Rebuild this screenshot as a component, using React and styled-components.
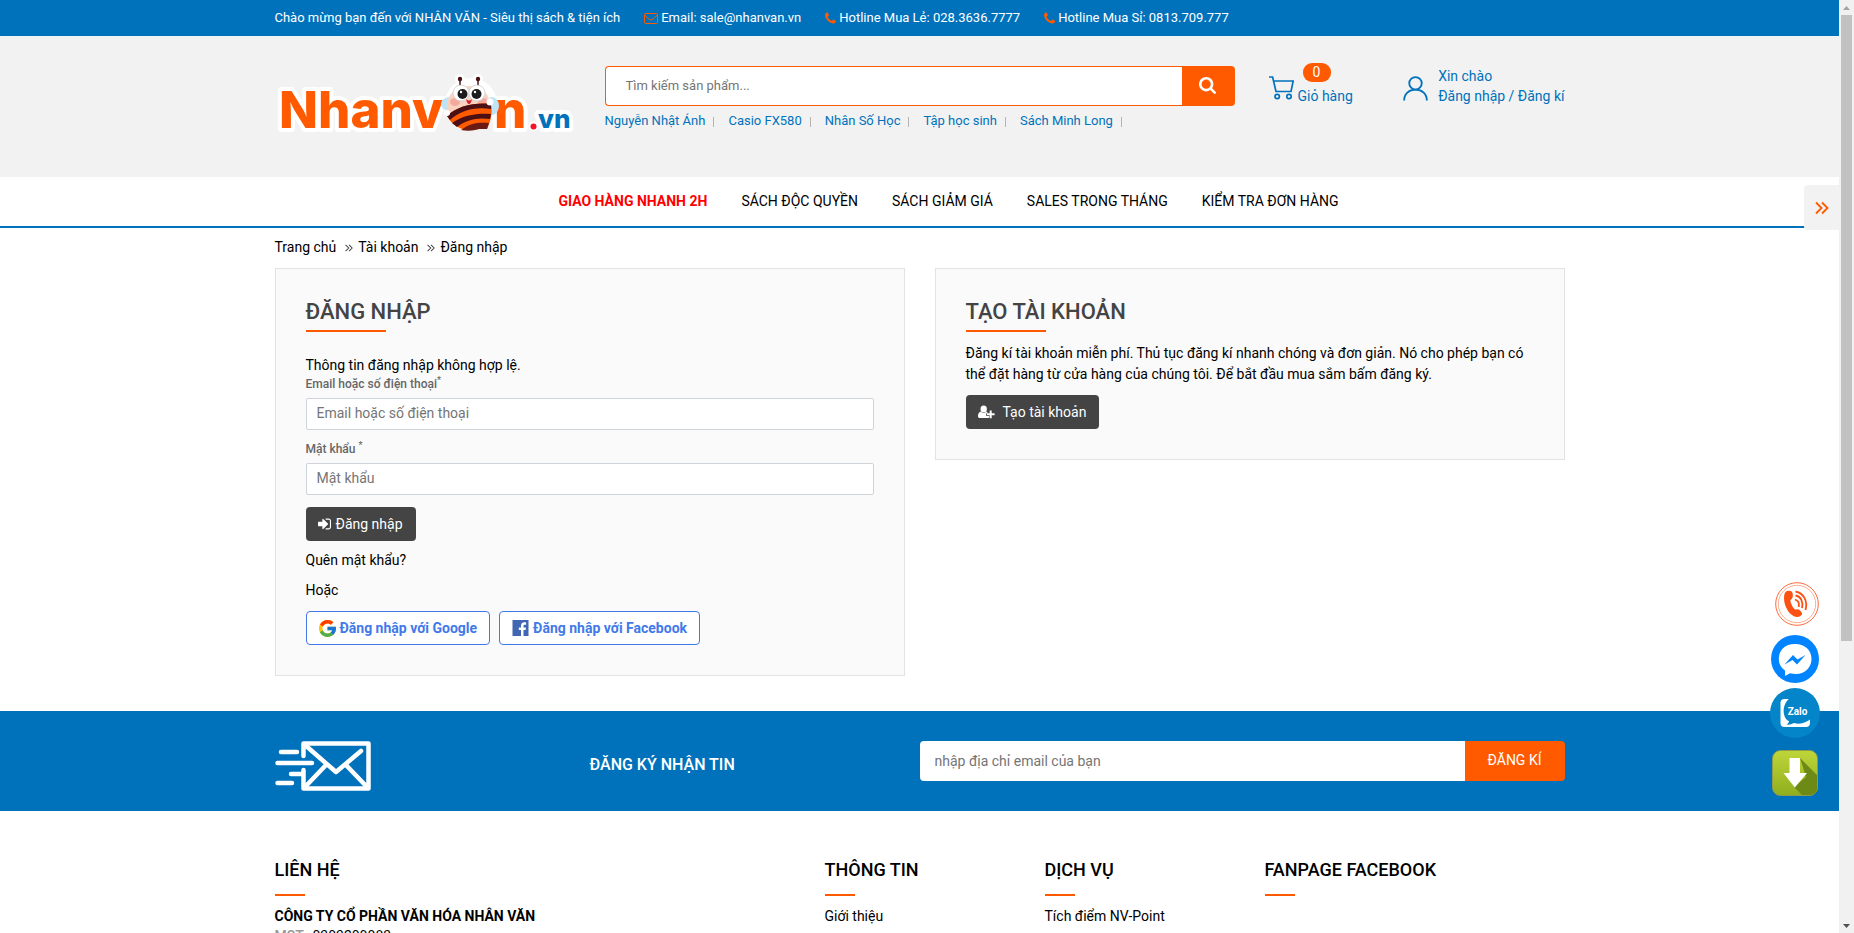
import React from "react";
import styled, { createGlobalStyle } from "styled-components";
import { FcGoogle } from "react-icons/fc";

const blue = "#0072bc";
const orange = "#ff5a00";
const dark = "#444444";

const GlobalStyle = createGlobalStyle`
  *, *::before, *::after { box-sizing: border-box; }
  html, body { margin: 0; padding: 0; }
  body {
    font-family: Roboto, "Liberation Sans", sans-serif;
    font-size: 14px;
    line-height: 21px;
    color: #000;
    background: #fff;
  }
  a { color: inherit; text-decoration: none; }
  button, input { font-family: inherit; font-size: 14px; }
  h1, h2, h3, p, ul { margin: 0; padding: 0; }
  h1, h2, h3 { font-weight: 500; }
  ul { list-style: none; }
  svg { display: block; flex: none; }
`;

const Shell = styled.div`
  display: flex;
  height: 100vh;
  overflow: hidden;
`;

const Page = styled.div`
  position: relative;
  flex: 1;
  min-width: 0;
  overflow: hidden;
`;

const Container = styled.div`
  width: 100%;
  max-width: 1320px;
  margin: 0 auto;
  padding: 0 15px;
`;

/* Scroll rail */
const ScrollRail = styled.div`
  flex: none;
  display: flex;
  flex-direction: column;
  align-items: center;
  gap: 2px;
  width: 15px;
  background: #f1f1f1;
`;
const RailArrow = styled.svg`
  width: 15px;
  height: 13px;
  fill: ${(p) => (p.$muted ? "#a3a3a3" : "#505050")};
`;
const RailTrack = styled.div`
  flex: 1;
  width: 11px;
`;
const RailThumb = styled.div`
  height: 69.3%;
  background: #c1c1c1;
`;

/* Top bar */
const TopBar = styled.div`
  background: ${blue};
  color: #fff;
  font-size: 13px;
`;
const TopList = styled.ul`
  display: flex;
  align-items: center;
  gap: 24px;
  height: 36px;
  padding-bottom: 1px;
`;
const TopItem = styled.li`
  display: flex;
  align-items: center;
  gap: 3px;
  svg { color: ${orange}; }
`;

/* Header */
const Header = styled.header`
  background: #f2f2f2;
`;
const HeaderRow = styled(Container)`
  display: grid;
  grid-template-columns: 330px 630px 1fr;
  height: 141px;
`;
const LogoLink = styled.a`
  padding-top: 34px;
`;
const SearchArea = styled.div`
  padding-top: 30px;
`;
const SearchForm = styled.form`
  display: flex;
  height: 40px;
`;
const SearchInput = styled.input`
  flex: 1;
  min-width: 0;
  padding: 0 20px 2px;
  font-size: 13px;
  border: 1px solid ${orange};
  border-right: 0;
  border-radius: 4px 0 0 4px;
  background: #fff;
  outline: 0;
  &::placeholder { color: #757575; opacity: 1; }
`;
const SearchButton = styled.button`
  display: flex;
  align-items: center;
  justify-content: center;
  width: 53px;
  padding: 0 2px 2px 0;
  border: 0;
  border-radius: 0 4px 4px 0;
  background: ${orange};
  color: #fff;
`;
const Keywords = styled.ul`
  display: flex;
  gap: 14px;
  padding-top: 4px;
  font-size: 13px;
  color: ${blue};
`;
const Keyword = styled.li`
  display: flex;
  align-items: center;
  gap: 8px;
  &::after {
    content: "";
    width: 1px;
    height: 10px;
    margin-top: 2px;
    background: #b5b5b5;
  }
`;
const Actions = styled.div`
  display: flex;
  justify-content: space-between;
  padding: 27px 0 0 34px;
  color: ${blue};
`;
const CartLink = styled.a`
  display: flex;
  align-items: flex-end;
  gap: 4px;
  height: 44px;
`;
const CartIconBox = styled.span`
  padding-bottom: 7px;
`;
const CartText = styled.span`
  display: flex;
  flex-direction: column;
  gap: 4px;
`;
const Badge = styled.span`
  display: block;
  width: 28px;
  height: 19px;
  margin-left: 5px;
  border-radius: 9px;
  background: ${orange};
  color: #fff;
  line-height: 19px;
  text-align: center;
`;
const Account = styled.div`
  display: flex;
  align-items: flex-start;
  gap: 10px;
  line-height: 20px;
  svg { margin-top: 13px; }
`;
const AccountText = styled.div`
  padding-top: 3px;
`;

/* Main navigation */
const Nav = styled.nav`
  border-bottom: 2px solid ${blue};
`;
const NavList = styled.ul`
  display: flex;
  justify-content: center;
  gap: 34px;
  padding: 14px 0 14px 58px;
`;
const NavLink = styled.a`
  color: ${(p) => (p.$hot ? "#ff0000" : "#000")};
  font-weight: ${(p) => (p.$hot ? 700 : 400)};
`;
const SideTab = styled.button`
  position: absolute;
  top: 185px;
  right: 0;
  display: flex;
  align-items: center;
  justify-content: center;
  width: 35px;
  height: 45px;
  padding: 0;
  border: 0;
  border-radius: 4px 0 0 4px;
  background: #f2f2f2;
  color: ${orange};
`;

/* Breadcrumb */
const Breadcrumb = styled.ol`
  display: flex;
  gap: 9px;
  margin: 0;
  padding: 9px 0 10px;
  list-style: none;
`;
const Crumb = styled.li`
  display: flex;
  align-items: center;
  gap: 5px;
  svg { color: #444; }
`;

/* Account panels */
const Panels = styled.main`
  display: grid;
  grid-template-columns: 1fr 1fr;
  align-items: start;
  gap: 30px;
  padding-bottom: 35px;
`;
const Panel = styled.section`
  padding: 30px;
  border: 1px solid #e3e3e3;
  background: #fafafa;
`;
const PanelTitle = styled.h1`
  padding-bottom: 6px;
  color: ${dark};
  font-size: 22px;
  line-height: 26px;
  &::after {
    content: "";
    display: block;
    width: 80px;
    height: 2px;
    margin-top: 5px;
    background: ${orange};
  }
`;
const Notice = styled.p`
  padding-top: 17px;
`;
const Field = styled.div`
  display: flex;
  flex-direction: column;
  gap: 5px;
  padding-bottom: ${(p) => (p.$last ? "12px" : "11px")};
`;
const Label = styled.label`
  color: #666;
  font-size: 12px;
  font-weight: 500;
  line-height: 17px;
  sup { font-size: 9px; line-height: 0; }
`;
const TextInput = styled.input`
  height: 32px;
  padding: 0 10px 3px;
  border: 1px solid #ced4da;
  border-radius: 2px;
  background: #fff;
  outline: 0;
  &::placeholder { color: #757575; opacity: 1; }
`;
const DarkButton = styled.button`
  display: inline-flex;
  align-items: center;
  gap: ${(p) => (p.$wide ? "8px" : "5px")};
  height: 34px;
  padding: 0 13px 0 12px;
  border: 0;
  border-radius: 4px;
  background: ${dark};
  color: #fff;
`;
const Line = styled.p`
  padding-top: 9px;
`;
const SocialRow = styled.div`
  display: flex;
  gap: 9px;
  padding-top: 10px;
`;
const SocialButton = styled.button`
  display: flex;
  align-items: center;
  gap: 4px;
  height: 34px;
  padding: 0 12px;
  border: 1px solid #4279e8;
  border-radius: 4px;
  background: #fff;
  color: #4279e8;
  font-weight: 700;
`;
const Intro = styled.p`
  padding: 5px 0 10px;
`;

/* Newsletter */
const Newsletter = styled.section`
  background: ${blue};
  color: #fff;
`;
const NewsletterRow = styled(Container)`
  display: grid;
  grid-template-columns: 1fr 1fr;
  gap: 0;
  padding-top: 30px;
  height: 100px;
`;
const NewsletterLead = styled.div`
  display: flex;
  align-items: flex-start;
  gap: 219px;
`;
const NewsletterTitle = styled.h2`
  padding-top: 13px;
  font-size: 16px;
`;
const SubscribeForm = styled.form`
  display: flex;
  height: 40px;
`;
const SubscribeInput = styled.input`
  flex: 1;
  min-width: 0;
  padding: 0 15px;
  border: 0;
  border-radius: 4px 0 0 4px;
  background: #fff;
  outline: 0;
  &::placeholder { color: #757575; opacity: 1; }
`;
const SubscribeButton = styled.button`
  width: 100px;
  padding: 0 0 2px;
  border: 0;
  border-radius: 0 4px 4px 0;
  background: ${orange};
  color: #fff;
`;

/* Footer */
const FooterGrid = styled.footer`
  display: grid;
  grid-template-columns: 550px 220px 220px 1fr;
  padding-top: 46px;
`;
const FooterTitle = styled.h3`
  font-size: 18px;
  line-height: 26px;
  padding-bottom: 10px;
  &::after {
    content: "";
    display: block;
    width: 30px;
    height: 2px;
    margin-top: 11px;
    background: ${orange};
  }
`;
const CompanyName = styled.p`
  font-weight: 700;
`;
const TaxLine = styled.p`
  display: flex;
  gap: 5px;
  line-height: 18px;
`;
const TaxLabel = styled.span`
  color: #999;
  font-weight: 500;
`;

/* Floating contact shortcuts */
const Floating = styled.aside`
  position: absolute;
  right: 19px;
  bottom: 137px;
  display: flex;
  flex-direction: column;
  align-items: center;
  gap: 5px;
`;
const FloatingLink = styled.a`
  display: block;
  padding: ${(p) => p.$pad || "0"};
`;

const EnvelopeIcon = () => (
  <svg width="14" height="12" viewBox="0 0 14 12" fill="none" stroke="currentColor" strokeWidth="1">
    <rect x="0.5" y="1.5" width="13" height="10" rx="1" />
    <path d="M0.8 3C2.5 5.4 4.6 6.600 5.900 7.600Q7 8.300 8.100 7.600C9.400 6.600 11.500 5.400 13.200 3" />
  </svg>
);

const PhoneIcon = () => (
  <svg width="11" height="12" viewBox="0 128 1408 1408" fill="currentColor">
    <path d="M1408 1240q0 27-10 70.500t-21 68.500q-21 50-122 106-94 51-186 51-27 0-53-3.500t-57.500-12.500-47-14.500-55.500-20.500-49-18q-98-35-175-83-127-79-264-216t-216-264q-48-77-83-175-3-9-18-49t-20.500-55.500-14.500-47-12.500-57.500-3.500-53q0-92 51-186 56-101 106-122 25-11 68.500-21t70.500-10q14 0 21 3 18 6 53 76 11 19 30 54t35 63.500 31 53.500q3 4 17.500 25t21.500 35.500 7 28.500q0 20-28.500 50t-62 55-62 53-28.500 46q0 9 5 22.500t8.500 20.500 14 24 11.500 19q76 137 174 235t235 174q2 1 19 11.500t24 14 20.500 8.500 22.500 5q18 0 46-28.500t53-62 55-62 50-28.500q14 0 28.500 7t35.500 21.500 25 17.500q25 15 53.500 31t63.500 35 54 30q70 35 76 53 3 7 3 21z" />
  </svg>
);

const SearchIcon = () => (
  <svg width="17" height="17" viewBox="64 128 1664 1664" fill="currentColor">
    <path d="M1216 832q0-185-131.500-316.500t-316.500-131.500-316.500 131.500-131.500 316.500 131.500 316.500 316.500 131.500 316.500-131.500 131.500-316.500zm512 832q0 52-38 90t-90 38q-54 0-90-38l-343-342q-179 124-399 124-143 0-273.500-55.500t-225-150-150-225-55.500-273.500 55.500-273.500 150-225 225-150 273.500-55.500 273.500 55.500 225 150 150 225 55.500 273.500q0 220-124 399l343 343q37 37 37 90z" />
  </svg>
);

const SignInIcon = () => (
  <svg width="13" height="12" viewBox="128 256 1536 1280" fill="currentColor">
    <path d="M1312 896q0 26-19 45l-544 544q-19 19-45 19t-45-19-19-45v-288h-448q-26 0-45-19t-19-45v-384q0-26 19-45t45-19h448v-288q0-26 19-45t45-19 45 19l544 544q19 19 19 45zm352-352v704q0 119-84.500 203.500t-203.500 84.500h-320q-13 0-22.500-9.500t-9.500-22.500q0-4-1-20t-.5-26.500 3-23.500 10-19.500 20.500-6.500h320q66 0 113-47t47-113v-704q0-66-47-113t-113-47h-312l-11.500-1-11.500-3-8-5.500-7-9-2-13.500q0-4-1-20t-.5-26.500 3-23.500 10-19.500 20.500-6.500h320q119 0 203.500 84.500t84.500 203.500z" />
  </svg>
);

const UserPlusIcon = () => (
  <svg width="17" height="14" viewBox="0 0 17 14" fill="currentColor">
    <ellipse cx="5.700" cy="4" rx="3.200" ry="3.600" />
    <path d="M2.700 6.600C0.800 7.200 0 8.900 0 11.200C0 12.400 0.800 13 1.800 13H10C10.600 13 11 12.800 11.300 12.500V11H8.200V8.200H9.700C9.400 7.400 9 6.900 8.600 6.600C7 8.300 4.300 8.300 2.700 6.600Z" />
    <path d="M11.700 5.400h2v2.900h2.900v2h-2.900v2.900h-2v-2.900H8.900v-2h2.800z" />
  </svg>
);

const DoubleAngle = ({ size, weight }) => (
  <svg width={size} height={size} viewBox="0 0 14 14" fill="none" stroke="currentColor" strokeWidth={weight}>
    <path d="M1 1.500L6.500 7L1 12.500M7 1.500L12.500 7L7 12.500" />
  </svg>
);

const CartIcon = () => (
  <svg width="25" height="24" viewBox="0 0 25 24" fill="none" stroke="currentColor" strokeWidth="1.700">
    <path d="M0 1H3.600L7 15.500H22L24.200 5H5" />
    <circle cx="8.200" cy="20.500" r="2.200" />
    <circle cx="20" cy="20.500" r="2.200" />
  </svg>
);

const UserIcon = () => (
  <svg width="25" height="25" viewBox="0 0 26 26" fill="none" stroke="currentColor" strokeWidth="1.900">
    <circle cx="13" cy="7.600" r="6.500" />
    <path d="M1.200 25.500C1.200 18.500 6 14.200 13 14.200S24.800 18.500 24.800 25.500" />
  </svg>
);

const FacebookIcon = () => (
  <svg width="17" height="16" viewBox="0 0 16 16">
    <rect width="16" height="16" fill="#4267b2" />
    <path d="M11 16V9.900h2.100l.4-2.500H11V6c0-.8.4-1.300 1.400-1.300h1.200V2.500C13.200 2.400 12.500 2.300 11.800 2.300C9.700 2.300 8.500 3.500 8.500 5.700V7.400H6.300V9.900H8.500V16z" fill="#fff" />
  </svg>
);

const MailFastIcon = () => (
  <svg width="96" height="50" viewBox="0 0 96 50" fill="none" stroke="#fff" strokeWidth="4.500" strokeLinecap="round" strokeLinejoin="round">
    <path d="M28.500 15V2.500H93.500V47.500H28.500V29" />
    <path d="M30 4L61 31L86 10M30 46L51 24M92 46L71 24" />
    <path d="M6 11H22M2.500 22H37M16 33H28M2.500 42H17" />
  </svg>
);

const Logo = () => (
  <svg width="300" height="80" viewBox="0 0 300 80" role="img" aria-label="Nhanvan.vn">
    <g fontFamily="Inter, sans-serif" fontWeight="800" strokeLinejoin="round" stroke="#fff" strokeWidth="8" paintOrder="stroke">
      <text x="4" y="58" fontSize="51" fill={orange}>Nhanv</text>
      <text x="219" y="58" fontSize="51" fill={orange}>n</text>
      <text x="263" y="58" fontSize="26" fill={blue}>vn</text>
    </g>
    <circle cx="196" cy="34" r="26" fill="#fff" />
    <circle cx="185" cy="9" r="5" fill="#fff" />
    <circle cx="203" cy="9" r="5" fill="#fff" />
    <circle cx="258.500" cy="56.500" r="5" fill="#fff" />
    <circle cx="258.500" cy="56.500" r="3" fill="#f5142b" />
    <ellipse cx="175" cy="34" rx="9" ry="7" fill="#bfe4f8" />
    <ellipse cx="217" cy="36" rx="7" ry="9" fill="#bfe4f8" />
    <path d="M185 16V9M203 16V9" stroke="#4a1016" strokeWidth="1.500" />
    <circle cx="185" cy="9" r="2.200" fill="#4a1016" />
    <circle cx="203" cy="9" r="2.200" fill="#4a1016" />
    <path d="M172 45C170 26 178 17 194 16C210 17 216 26 216 42Z" fill="#f9d3c2" />
    <ellipse cx="180" cy="32" rx="5" ry="4" fill="#f5a99b" />
    <ellipse cx="208" cy="32" rx="5" ry="4" fill="#f5a99b" />
    <path d="M172 46C182 36 200 32 216 34C218 44 215 53 212 59H204C190 63 178 57 172 46Z" fill={orange} />
    <path d="M172 46C182 36 200 32 216 34V39C200 36 184 41 175 50Z" fill="#4a1016" />
    <path d="M177 53C188 45 203 43 216 44L215 49C203 47 190 50 182 57Z" fill="#4a1016" />
    <path d="M186 60C195 53 204 52 214 53L212 59H204Q195 62 186 60Z" fill="#6b1a14" />
    <circle cx="186" cy="23" r="8" fill="#fff" stroke="#cfcfcf" strokeWidth="0.800" />
    <circle cx="202" cy="23" r="8" fill="#fff" stroke="#cfcfcf" strokeWidth="0.800" />
    <circle cx="187.500" cy="24" r="5" fill="#1c1c1c" />
    <circle cx="201.500" cy="24" r="5" fill="#1c1c1c" />
    <circle cx="186" cy="22" r="1.200" fill="#fff" />
    <circle cx="200" cy="22" r="1.200" fill="#fff" />
    <path d="M191 29Q194 32 197 29Q196 34 194 34Q192 34 191 29Z" fill="#d5202c" />
    <circle cx="172" cy="43" r="3" fill="#fff" />
    <circle cx="215" cy="32" r="3.500" fill="#fff" />
  </svg>
);

const CallBubble = () => (
  <svg width="44" height="44" viewBox="0 0 44 44" fill="none">
    <circle cx="22" cy="22" r="21.300" fill="#fff" stroke="#fb6a3c" strokeWidth="1" />
    <circle cx="22" cy="22" r="18.700" stroke="#fcae92" strokeWidth="1" />
    <path d="M12 9C15 8 17.500 9 17.800 12C18 15 17.500 17 16 17.500C14.800 18 15.500 20.500 17 23.500C18.500 26.500 20 28 21.500 27.500C23.500 26.500 26 29 27 31C27.500 33.500 24 35 22 35C15 34.500 9 25 9 16C9 12 10 9.600 12 9Z" fill="#fb5113" />
    <path d="M20 17.500C23 18.500 24.500 21.500 23.700 25M20.500 13.500C26 14.500 28.500 20 27 26M20.500 9.500C28.500 11 33 19 30.500 28" stroke="#fb5113" strokeWidth="1.800" />
  </svg>
);

const MessengerBubble = () => (
  <svg width="48" height="48" viewBox="0 0 48 48">
    <circle cx="24" cy="24" r="24" fill="#0084ff" />
    <path d="M24 9C12.500 9 7.800 16.500 7.800 24C7.800 29 10 32.500 14 35.500V41L19 38.300C33 41.500 40.500 33 40.500 24C40.500 16 35 9 24 9Z" fill="#fff" />
    <path d="M13.500 29.500L22 20L26.500 24.500L34.500 20L26 29.500L21.500 25Z" fill="#0084ff" />
  </svg>
);

const ZaloBubble = () => (
  <svg width="50" height="50" viewBox="0 0 50 50">
    <circle cx="25" cy="25" r="25" fill="#0484c9" />
    <path d="M20 11H14.500Q10.500 11 10.500 15V35Q10.500 39 14.500 39H36Q40 39 40 34.500V31" fill="#fff" />
    <path d="M25 8C10 12 12 31 19 33C19 35 17.500 36 16.500 36.500C20 37 22 36 24 35C31 37 37 34 42 30V8Z" fill="#0484c9" />
    <text x="27.500" y="27" fill="#fff" fontFamily="Roboto, sans-serif" fontSize="10" fontWeight="700" textAnchor="middle">Zalo</text>
  </svg>
);

const DownloadBubble = () => (
  <svg width="46" height="46" viewBox="0 0 46 46">
    <defs>
      <linearGradient id="leaf" x1="0" y1="0" x2="0" y2="1">
        <stop offset="0" stopColor="#bfd63a" />
        <stop offset="1" stopColor="#8fae1e" />
      </linearGradient>
    </defs>
    <rect x="0.500" y="0.500" width="45" height="45" rx="8" fill="url(#leaf)" stroke="#8f9a4a" />
    <path d="M28 8L45 25V38Q45 45 38 45H30L22 37L34 27Z" fill="#6d8a16" />
    <path d="M17.500 8H28V23H35L22.800 37.500L11.500 23H17.500Z" fill="#fff" />
  </svg>
);

const navItems = ["SÁCH ĐỘC QUYỀN", "SÁCH GIẢM GIÁ", "SALES TRONG THÁNG", "KIỂM TRA ĐƠN HÀNG"];
const keywords = ["Nguyễn Nhật Ánh", "Casio FX580", "Nhân Số Học", "Tập học sinh", "Sách Minh Long"];

export default function App() {
  const stop = (event) => event.preventDefault();
  return (
    <Shell>
      <GlobalStyle />
      <Page>
        <TopBar>
          <Container>
            <TopList>
              <TopItem>Chào mừng bạn đến với NHÂN VĂN - Siêu thị sách &amp; tiện ích</TopItem>
              <TopItem><EnvelopeIcon /> Email: sale@nhanvan.vn</TopItem>
              <TopItem><PhoneIcon /> Hotline Mua Lẻ: 028.3636.7777</TopItem>
              <TopItem><PhoneIcon /> Hotline Mua Sỉ: 0813.709.777</TopItem>
            </TopList>
          </Container>
        </TopBar>

        <Header>
          <HeaderRow>
            <LogoLink href="#"><Logo /></LogoLink>
            <SearchArea>
              <SearchForm role="search" onSubmit={stop}>
                <SearchInput type="search" aria-label="Tìm kiếm" placeholder="Tìm kiếm sản phẩm..." />
                <SearchButton type="submit" aria-label="Tìm kiếm"><SearchIcon /></SearchButton>
              </SearchForm>
              <Keywords>
                {keywords.map((word) => (
                  <Keyword key={word}><a href="#">{word}</a></Keyword>
                ))}
              </Keywords>
            </SearchArea>
            <Actions>
              <CartLink href="#">
                <CartIconBox><CartIcon /></CartIconBox>
                <CartText>
                  <Badge>0</Badge>
                  <span>Giỏ hàng</span>
                </CartText>
              </CartLink>
              <Account>
                <UserIcon />
                <AccountText>
                  <div>Xin chào</div>
                  <a href="#">Đăng nhập</a> / <a href="#">Đăng kí</a>
                </AccountText>
              </Account>
            </Actions>
          </HeaderRow>
        </Header>

        <Nav>
          <Container>
            <NavList>
              <li><NavLink href="#" $hot>GIAO HÀNG NHANH 2H</NavLink></li>
              {navItems.map((item) => (
                <li key={item}><NavLink href="#">{item}</NavLink></li>
              ))}
            </NavList>
          </Container>
        </Nav>
        <SideTab type="button" aria-label="Mở rộng"><DoubleAngle size={14} weight={1.8} /></SideTab>

        <Container>
          <Breadcrumb>
            <Crumb><a href="#">Trang chủ</a></Crumb>
            <Crumb><DoubleAngle size={8} weight={1.8} /><a href="#">Tài khoản</a></Crumb>
            <Crumb><DoubleAngle size={8} weight={1.8} />Đăng nhập</Crumb>
          </Breadcrumb>

          <Panels>
            <Panel>
              <PanelTitle>ĐĂNG NHẬP</PanelTitle>
              <form onSubmit={stop}>
                <Notice>Thông tin đăng nhập không hợp lệ.</Notice>
                <Field>
                  <Label htmlFor="account">Email hoặc số điện thoại<sup>*</sup></Label>
                  <TextInput id="account" type="text" placeholder="Email hoặc số điện thoại" />
                </Field>
                <Field $last>
                  <Label htmlFor="password">Mật khẩu <sup>*</sup></Label>
                  <TextInput id="password" type="password" placeholder="Mật khẩu" />
                </Field>
                <DarkButton type="submit"><SignInIcon />Đăng nhập</DarkButton>
              </form>
              <Line><a href="#">Quên mật khẩu?</a></Line>
              <Line>Hoặc</Line>
              <SocialRow>
                <SocialButton type="button"><FcGoogle size={17} viewBox="4 4 40 40" />Đăng nhập với Google</SocialButton>
                <SocialButton type="button"><FacebookIcon />Đăng nhập với Facebook</SocialButton>
              </SocialRow>
            </Panel>
            <Panel>
              <PanelTitle as="h2">TẠO TÀI KHOẢN</PanelTitle>
              <Intro>
                Đăng kí tài khoản miễn phí. Thủ tục đăng kí nhanh chóng và đơn giản. Nó cho phép bạn có thể đặt hàng từ cửa hàng của chúng tôi. Để bắt đầu mua sắm bấm đăng ký.
              </Intro>
              <DarkButton type="button" $wide><UserPlusIcon />Tạo tài khoản</DarkButton>
            </Panel>
          </Panels>
        </Container>

        <Newsletter>
          <NewsletterRow>
            <NewsletterLead>
              <MailFastIcon />
              <NewsletterTitle>ĐĂNG KÝ NHẬN TIN</NewsletterTitle>
            </NewsletterLead>
            <SubscribeForm onSubmit={stop}>
              <SubscribeInput type="email" aria-label="Email" placeholder="nhập địa chỉ email của bạn" />
              <SubscribeButton type="submit">ĐĂNG KÍ</SubscribeButton>
            </SubscribeForm>
          </NewsletterRow>
        </Newsletter>

        <Container>
          <FooterGrid>
            <section>
              <FooterTitle>LIÊN HỆ</FooterTitle>
              <CompanyName>CÔNG TY CỔ PHẦN VĂN HÓA NHÂN VĂN</CompanyName>
              <TaxLine><TaxLabel>MST:</TaxLabel>0303209083</TaxLine>
            </section>
            <section>
              <FooterTitle>THÔNG TIN</FooterTitle>
              <a href="#">Giới thiệu</a>
            </section>
            <section>
              <FooterTitle>DỊCH VỤ</FooterTitle>
              <a href="#">Tích điểm NV-Point</a>
            </section>
            <section>
              <FooterTitle>FANPAGE FACEBOOK</FooterTitle>
            </section>
          </FooterGrid>
        </Container>

        <Floating>
          <FloatingLink href="#" aria-label="Gọi điện" $pad="0 0 4px 4px"><CallBubble /></FloatingLink>
          <FloatingLink href="#" aria-label="Messenger"><MessengerBubble /></FloatingLink>
          <FloatingLink href="#" aria-label="Zalo" $pad="0 0 7px"><ZaloBubble /></FloatingLink>
          <FloatingLink href="#" aria-label="Tải ứng dụng"><DownloadBubble /></FloatingLink>
        </Floating>
      </Page>

      <ScrollRail aria-hidden="true">
        <RailArrow $muted viewBox="0 0 15 13"><path d="M7.500 6L11 10H4z" /></RailArrow>
        <RailTrack><RailThumb /></RailTrack>
        <RailArrow viewBox="0 0 15 13"><path d="M4 4H11L7.500 8z" /></RailArrow>
      </ScrollRail>
    </Shell>
  );
}
